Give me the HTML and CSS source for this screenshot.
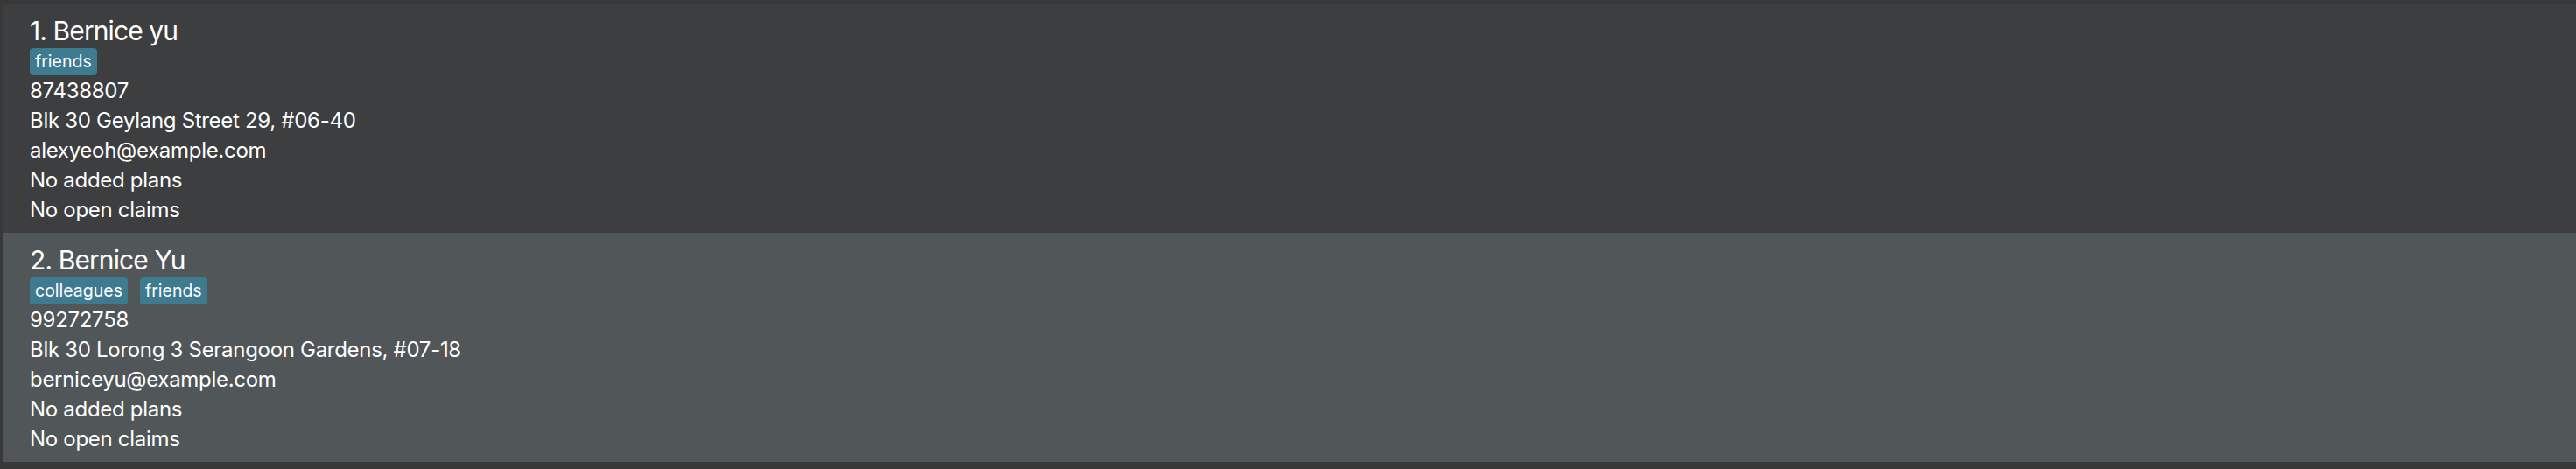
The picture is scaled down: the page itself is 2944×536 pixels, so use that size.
FILE: index.html
```html
<!DOCTYPE html>
<html lang="en">
<head>
<meta charset="utf-8">
<title>Person list</title>
<link rel="stylesheet" href="styles.css">
</head>
<body>
<div class="list">
  <div class="card even">
    <div class="name">1. Bernice yu</div>
    <div class="tags"><span class="tag">friends</span></div>
    <div class="field">87438807</div>
    <div class="field">Blk 30 Geylang Street 29, #06-40</div>
    <div class="field">alexyeoh@example.com</div>
    <div class="field">No added plans</div>
    <div class="field">No open claims</div>
  </div>
  <div class="card odd">
    <div class="name">2. Bernice Yu</div>
    <div class="tags"><span class="tag">colleagues</span><span class="tag">friends</span></div>
    <div class="field">99272758</div>
    <div class="field">Blk 30 Lorong 3 Serangoon Gardens, #07-18</div>
    <div class="field">berniceyu@example.com</div>
    <div class="field">No added plans</div>
    <div class="field">No open claims</div>
  </div>
</div>
</body>
</html>
```
FILE: styles.css
```css
html, body {
  margin: 0;
  padding: 0;
  background: #383838;
}

body {
  width: 2944px;
  height: 536px;
  overflow: hidden;
  font-family: "Inter", "Liberation Sans", sans-serif;
  color: #ffffff;
}

.list {
  display: flex;
  flex-direction: column;
  padding: 4px 0 8px 4px;
}

.card {
  height: 262px;
  box-sizing: border-box;
  padding: 11px 0 0 30px;
  display: flex;
  flex-direction: column;
}

.card.even {
  background: #3c3e3f;
}

.card.odd {
  background: #515658;
}

.name {
  font-size: 30px;
  line-height: 40px;
  letter-spacing: -0.9px;
  white-space: nowrap;
}

.tags {
  display: flex;
  gap: 14px;
  margin-bottom: 1px;
}

.tag {
  background: #3e7b91;
  color: #ffffff;
  font-size: 19.5px;
  line-height: 31px;
  height: 31px;
  padding: 0 6px;
  border-radius: 4px;
  white-space: nowrap;
}

.field {
  font-size: 24px;
  line-height: 34px;
  letter-spacing: -0.3px;
  white-space: nowrap;
}
```
